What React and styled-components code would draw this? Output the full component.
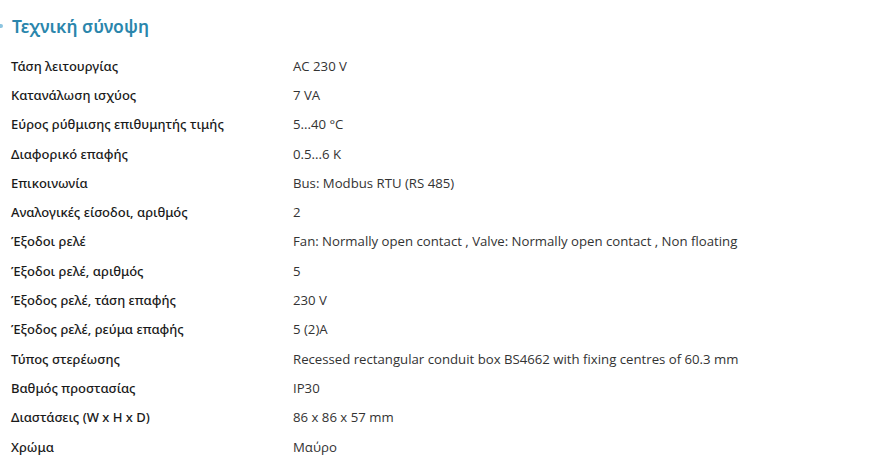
import styled, { createGlobalStyle } from "styled-components";

const GlobalStyle = createGlobalStyle`
  body {
    margin: 0;
    background: #fff;
  }
`;

const specs = [
  ["Τάση λειτουργίας", "AC 230 V"],
  ["Κατανάλωση ισχύος", "7 VA"],
  ["Εύρος ρύθμισης επιθυμητής τιμής", "5...40 °C"],
  ["Διαφορικό επαφής", "0.5...6 K"],
  ["Επικοινωνία", "Bus: Modbus RTU (RS 485)"],
  ["Αναλογικές είσοδοι, αριθμός", "2"],
  ["Έξοδοι ρελέ", "Fan: Normally open contact , Valve: Normally open contact , Non floating"],
  ["Έξοδοι ρελέ, αριθμός", "5"],
  ["Έξοδος ρελέ, τάση επαφής", "230 V"],
  ["Έξοδος ρελέ, ρεύμα επαφής", "5 (2)A"],
  ["Τύπος στερέωσης", "Recessed rectangular conduit box BS4662 with fixing centres of 60.3 mm"],
  ["Βαθμός προστασίας", "IP30"],
  ["Διαστάσεις (W x H x D)", "86 x 86 x 57 mm"],
  ["Χρώμα", "Μαύρο"],
];

const App = () => {
  return (
    <Page>
      <GlobalStyle />
      <Heading>
        <Marker />
        Τεχνική σύνοψη
      </Heading>
      <Table>
        {specs.map(([label, value]) => (
          <Row key={label}>
            <Label>{label}</Label>
            <Value>{value}</Value>
          </Row>
        ))}
      </Table>
    </Page>
  );
};

const Page = styled.div({
  width: "881px",
  height: "470px",
  overflow: "hidden",
  background: "#fff",
});
const Heading = styled.h2({
  display: "flex",
  alignItems: "center",
  margin: "0",
  padding: "15px 0 0 0",
  height: "22px",
  fontFamily: '"Noto Sans", "Open Sans", sans-serif',
  fontSize: "17.5px",
  fontWeight: "600",
  color: "#2a86ac",
  lineHeight: "22px",
});
const Marker = styled.span({
  width: "3px",
  height: "4px",
  marginRight: "9px",
  background: "#8cc4e0",
  borderRadius: "0 2px 2px 0",
});
const Table = styled.div({
  display: "flex",
  flexDirection: "column",
  paddingTop: "14px",
});
const Row = styled.div({
  display: "grid",
  gridTemplateColumns: "282px 1fr",
  alignItems: "center",
  height: "29.3px",
  paddingLeft: "11px",
});
const Label = styled.span({
  fontFamily: '"Noto Sans", sans-serif',
  fontSize: "13px",
  fontWeight: "500",
  color: "#1a1a1a",
});
const Value = styled.span({
  fontFamily: '"Open Sans", sans-serif',
  fontSize: "13.2px",
  color: "#333",
});

export default App;
